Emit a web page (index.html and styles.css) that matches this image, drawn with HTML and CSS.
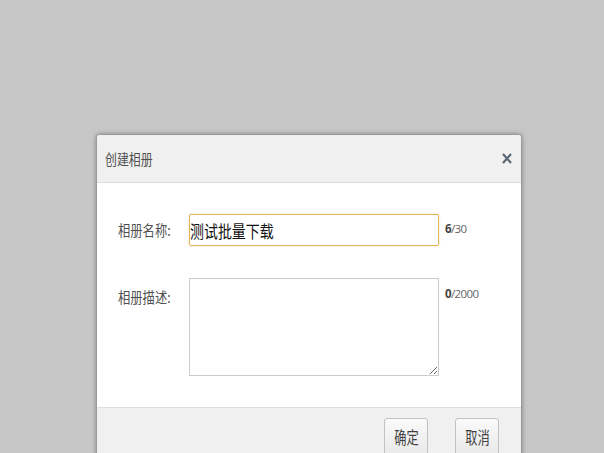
FILE: index.html
```html
<!DOCTYPE html>
<html lang="zh-CN">
<head>
<meta charset="utf-8">
<title>创建相册</title>
<link rel="stylesheet" href="styles.css">
</head>
<body>
<div class="dialog">
  <div class="dlg-head">
    <span class="title"><span class="sq">创建相册</span></span>
    <span class="close" aria-label="关闭">
      <svg width="10" height="11" viewBox="0 0 10 11"><path d="M1 1 L9 10 M9 1 L1 10" stroke="#5b6876" stroke-width="2.2" fill="none"/></svg>
    </span>
  </div>
  <div class="dlg-body">
    <div class="row">
      <label class="lbl"><span class="sq">相册名称:</span></label>
      <div class="name-box"><span class="sq big">测试批量下载</span></div>
      <span class="count"><b>6</b>/30</span>
    </div>
    <div class="row row-desc">
      <label class="lbl lbl-top"><span class="sq">相册描述:</span></label>
      <textarea class="desc"></textarea>
      <span class="count count-top"><b>0</b>/2000</span>
    </div>
  </div>
  <div class="dlg-foot">
    <button class="btn"><span class="sqc">确定</span></button>
    <button class="btn"><span class="sqc">取消</span></button>
  </div>
</div>
</body>
</html>
```
FILE: styles.css
```css
html, body {
  margin: 0;
  padding: 0;
  height: 453px;
  overflow: hidden;
  background: #c6c6c6;
  font-family: "Noto Sans CJK SC", "Noto Sans", sans-serif;
}
.dialog {
  margin: 134px 0 0 96px;
  width: 424px;
  border: 1px solid #9a9a9a;
  border-radius: 4px;
  background: #fff;
  box-shadow: 0 0 4px rgba(0,0,0,0.35);
  overflow: hidden;
}
.sq {
  display: inline-block;
  transform: scaleX(0.82);
  transform-origin: left center;
  white-space: nowrap;
}
.sqc {
  display: inline-block;
  transform: scaleX(0.74);
  transform-origin: center center;
  white-space: nowrap;
}
.dlg-head {
  height: 47px;
  background: #f0f0f0;
  border-bottom: 1px solid #dadada;
  display: flex;
  align-items: center;
  justify-content: space-between;
  padding: 0 9px 0 8px;
}
.title {
  font-size: 14.5px;
  color: #505050;
  line-height: 20px;
}
.close {
  display: flex;
  width: 10px;
  height: 11px;
  margin-top: -1px;
}
.dlg-body {
  padding: 31px 0 31px 21px;
  display: flex;
  flex-direction: column;
  gap: 32px;
}
.row {
  display: flex;
  align-items: center;
}
.row-desc {
  align-items: flex-start;
}
.lbl {
  width: 71px;
  font-size: 15px;
  color: #505050;
  line-height: 20px;
}
.lbl-top {
  margin-top: 9px;
}
.name-box {
  box-sizing: border-box;
  width: 250px;
  height: 32px;
  border: 1px solid #e2b55a;
  border-radius: 2px;
  box-shadow: 0 0 2px rgba(226,181,90,0.6);
  padding: 0;
  display: flex;
  align-items: center;
  font-size: 17px;
  color: #111;
}
.desc {
  box-sizing: border-box;
  width: 250px;
  height: 98px;
  margin: 0;
  border: 1px solid #cccccc;
  padding: 4px;
  font-family: inherit;
  background: #fff;
}
.count {
  margin-left: 6px;
  font-family: "Open Sans", "Liberation Sans", sans-serif;
  font-size: 11.5px;
  color: #666;
  letter-spacing: -0.6px;
  margin-top: -4px;
}
.count b {
  color: #444;
}
.count-top {
  margin-top: 8px;
}
.dlg-foot {
  background: #f0f0f0;
  border-top: 1px solid #dedede;
  padding: 10px 22px 20px 0;
  display: flex;
  justify-content: flex-end;
  gap: 27px;
}
.btn {
  width: 44px;
  height: 38px;
  padding: 0;
  border: 1px solid #c2c2c2;
  border-radius: 3px;
  background: linear-gradient(#fafafa, #e9e9e9);
  font-family: inherit;
  font-size: 16.5px;
  color: #404040;
  line-height: 20px;
  display: flex;
  align-items: flex-start;
  justify-content: center;
  padding-top: 8px;
  box-sizing: border-box;
}
```
